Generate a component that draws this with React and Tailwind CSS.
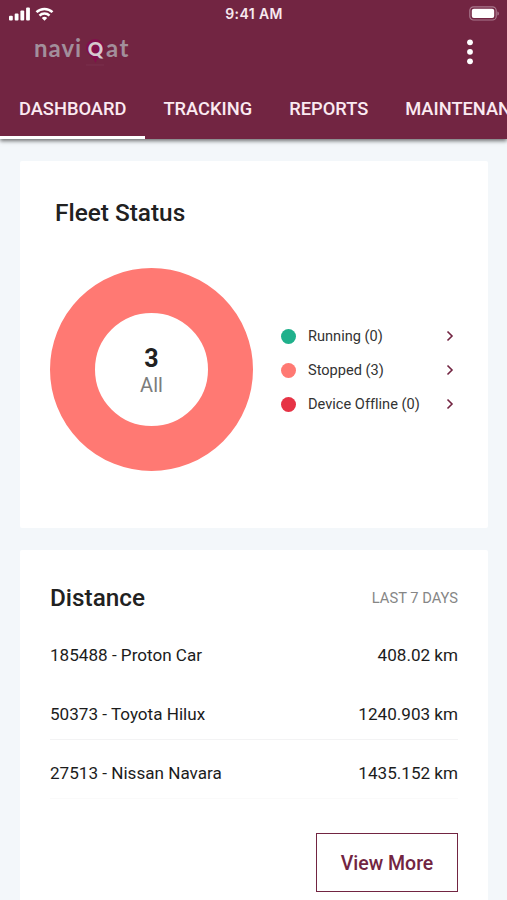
import React from "react";

const tabs = ["DASHBOARD", "TRACKING", "REPORTS", "MAINTENANCE"];

const fleet = [
    { label: "Running (0)", dot: "bg-[#1fb08b]" },
    { label: "Stopped (3)", dot: "bg-[#ff7973]" },
    { label: "Device Offline (0)", dot: "bg-[#e63345]" }
];

const distances = [
    { name: "185488 - Proton Car", value: "408.02 km", line: "border-transparent" },
    { name: "50373 - Toyota Hilux", value: "1240.903 km", line: "border-[#f3f3f4]" },
    { name: "27513 - Nissan Navara", value: "1435.152 km", line: "border-[#fafafa]" }
];

const StatusBar = () => (
    <div className="flex h-[27px] items-center justify-between pr-[7px] pl-[9px]">
        <div className="flex w-[120px] items-center gap-[4px]">
            <svg width="22" height="14" viewBox="0 0 22 14" fill="white">
                <rect x="0" y="8.7" width="3.8" height="4.8" rx="1" />
                <rect x="5.7" y="6.5" width="3.8" height="7" rx="1" />
                <rect x="11.4" y="3.5" width="3.8" height="10" rx="1" />
                <rect x="17.1" y="0.5" width="3.8" height="13" rx="1" />
            </svg>
            <svg width="19" height="14" viewBox="0 0 18 14" fill="none" stroke="white" strokeWidth="2.5">
                <path d="M1 5.2a11.4 11.4 0 0 1 16 0" />
                <path d="M4 8.6a7.2 7.2 0 0 1 10 0" />
                <path d="M6.3 11a3.9 3.9 0 0 1 5.4 0L9 13.8z" fill="white" stroke="none" />
            </svg>
        </div>
        <span className="font-['Inter'] text-[14px] leading-none font-semibold tracking-[0.4px] text-[#f7e9ef]">
            9:41 AM
        </span>
        <div className="flex w-[121px] justify-end">
            <svg width="31" height="15" viewBox="0 0 31 15">
                <rect x="0.8" y="0.8" width="26.4" height="13.2" rx="3.8" fill="none" stroke="#a9788d" strokeWidth="1.2" />
                <rect x="2.8" y="2.8" width="22.4" height="9.2" rx="2" fill="white" />
                <path d="M28.4 5.4c2 .6 2 3.6 0 4.2z" fill="#a9788d" />
            </svg>
        </div>
    </div>
);

const Logo = () => (
    <div className="flex h-[26px] items-center font-['Lato'] text-[24px] leading-none font-bold text-[#a28f9b]">
        <span className="-mt-[3px] w-[52px] tracking-[1px]">navi</span>
        <span className="relative flex h-[26px] w-[19px] items-center justify-center">
            <svg className="absolute top-0 left-0" width="18" height="30" viewBox="0 0 18 30">
                <path d="M9 3a9 9 0 0 1 9 9c0 6-6 8-8.5 15C7 20 0 18 0 12a9 9 0 0 1 9-9z" fill="#820f4c" />
                <path d="M0 29h18" stroke="#7b3450" strokeWidth="0.8" />
            </svg>
            <span className="relative -mt-[2px] text-[19px] font-black text-[#d6c9d0]">Q</span>
        </span>
        <span className="-mt-[3px] ml-[1px] tracking-[1.6px]">at</span>
    </div>
);

const Header = () => (
    <header className="relative flex h-[139px] flex-col bg-[#722542] shadow-[0_2px_4px_rgba(0,0,0,0.55)]">
        <StatusBar />
        <div className="flex h-[52px] items-start justify-between pt-[9px] pr-[33px] pl-[34px]">
            <Logo />
            <svg className="mt-[3px]" width="8" height="26" viewBox="0 0 8 26" fill="white">
                <circle cx="4" cy="3.3" r="2.9" />
                <circle cx="4" cy="12.8" r="2.9" />
                <circle cx="4" cy="22.3" r="2.9" />
            </svg>
        </div>
        <nav className="flex h-[60px] overflow-hidden text-[18.3px] font-medium whitespace-nowrap text-[#fbeaf1]">
            {tabs.map((tab, i) => (
                <div
                    key={tab}
                    className={
                        i === 0
                            ? "border-b-[3px] border-white pt-[16px] pr-[18.5px] pl-[19px]"
                            : "border-b-[3px] border-transparent px-[18.5px] pt-[16px]"
                    }
                >
                    {tab}
                </div>
            ))}
        </nav>
    </header>
);

const FleetStatus = () => (
    <section className="h-[367px] rounded-[2px] bg-white pt-[34px]">
        <h2 className="pl-[35px] text-[24.4px] leading-9 font-medium">Fleet Status</h2>
        <div className="mt-[37px] flex items-center pr-[34px] pl-[30px]">
            <div className="flex size-[203px] shrink-0 flex-col items-center justify-center rounded-full border-[45.5px] border-[#ff7973] pt-[3px]">
                <span className="text-[25px] leading-[28px] font-bold">3</span>
                <span className="text-[20px] leading-[24px] text-[#7c7c7c]">All</span>
            </div>
            <ul className="mt-px ml-[28px] flex-1 [font-variant-ligatures:none]">
                {fleet.map((item) => (
                    <li key={item.label} className="flex h-[34px] items-center text-[14.6px] text-[#333]">
                        <span className={`mr-3 size-[15px] shrink-0 rounded-full ${item.dot}`} />
                        <span className="flex-1 pt-[2px] whitespace-nowrap">{item.label}</span>
                        <svg width="8" height="12" viewBox="0 0 8 12" fill="none" stroke="#722542" strokeWidth="1.6">
                            <path d="M1.5 1.5 6 6l-4.500 4.500" />
                        </svg>
                    </li>
                ))}
            </ul>
        </div>
    </section>
);

const Distance = () => (
    <section className="h-[370px] rounded-[2px] bg-white px-[30px] pt-[30px]">
        <div className="flex h-9 items-center justify-between">
            <h2 className="text-[24.3px] font-medium">Distance</h2>
            <span className="pt-px text-[14.7px] text-[#868686]">LAST 7 DAYS</span>
        </div>
        <ul className="mt-[6px] text-[17.1px] text-[#1c1c1c]">
            {distances.map((row) => (
                <li key={row.name} className={`flex h-[59px] items-center justify-between border-b pt-[10px] ${row.line}`}>
                    <span>{row.name}</span>
                    <span>{row.value}</span>
                </li>
            ))}
        </ul>
        <div className="mt-[34px] flex justify-end">
            <button className="h-[59px] w-[142px] border border-[#722542] pt-[2px] text-[19.5px] font-medium text-[#722542]">
                View More
            </button>
        </div>
    </section>
);

const App = () => (
    <div className="h-[900px] w-[507px] overflow-hidden bg-[#f3f7fa] font-['Roboto',sans-serif] text-[#212121]">
        <Header />
        <main className="flex flex-col gap-[22px] pt-[22px] pr-[19px] pl-5">
            <FleetStatus />
            <Distance />
        </main>
    </div>
);

export default App;
